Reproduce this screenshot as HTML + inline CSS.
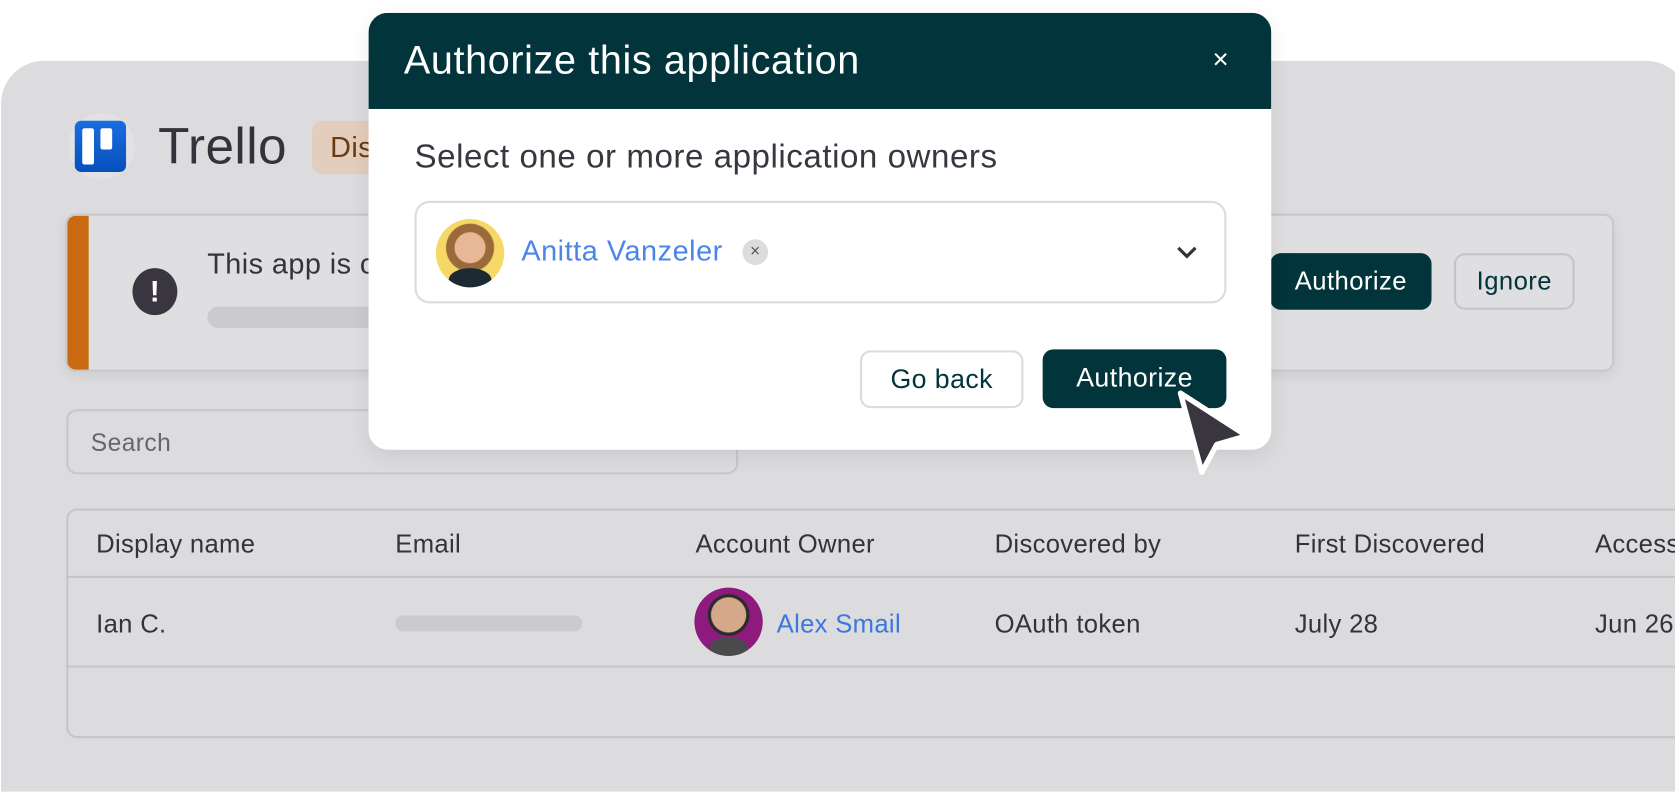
<!DOCTYPE html>
<html><head><meta charset="utf-8"><style>
*{box-sizing:border-box;margin:0;padding:0}
html,body{width:1675px;height:792px;overflow:hidden;background:#fff;font-family:"Liberation Sans",sans-serif;color:#35323b}
#s{position:absolute;left:0;top:0;width:1568px;height:742px;transform:scale(1.0683);transform-origin:0 0;letter-spacing:0.4px}
.a{position:absolute;white-space:nowrap}
.btn{position:absolute;border-radius:10px;display:flex;align-items:center;justify-content:center;font-size:24px}
.dark{background:#02343b;color:#fff}
.th{position:absolute;top:496px;font-size:24px;color:#35323b;letter-spacing:0.3px;white-space:nowrap}
.td{position:absolute;top:571px;font-size:24px;color:#35323b;letter-spacing:0.3px;white-space:nowrap}
</style></head><body><div id="s">
<div class="a" style="left:1px;top:57px;width:1580px;height:684px;background:#dcdcde;border-radius:40px 40px 0 0"></div>
<div class="a" style="left:64px;top:106px;width:62px;height:62px;border-radius:50%;background:#e2e2e4"></div>
<div class="a" style="left:70px;top:113px;width:48px;height:48px;border-radius:6px;background:linear-gradient(#1a6de0,#0650bd)"></div>
<div class="a" style="left:77px;top:120px;width:11px;height:34px;border-radius:2px;background:#fff"></div>
<div class="a" style="left:94px;top:120px;width:11px;height:20px;border-radius:2px;background:#fff"></div>
<div class="a" style="left:148px;top:110px;font-size:48px;color:#35323b">Trello</div>
<div class="a" style="left:292px;top:113px;width:80px;height:50px;border-radius:10px;background:#e3cdbc;color:#6b3a10;font-size:27px;padding:10px 0 0 17px">Dis</div>

<div class="a" style="left:61px;top:200px;width:1450px;height:148px;border-radius:10px;background:#dfdfe1;border:2px solid #c9c9cb;overflow:hidden;box-shadow:0 4px 10px rgba(0,0,0,.06)">
 <div class="a" style="left:0;top:0;width:20px;height:148px;background:#c96a12"></div>
</div>
<div class="a" style="left:124px;top:251px;width:42px;height:44px;border-radius:50%;background:#3a3640;color:#fff;font-weight:bold;font-size:28px;text-align:center;line-height:44px">!</div>
<div class="a" style="left:194px;top:232px;font-size:27px">This app is c</div>
<div class="a" style="left:194px;top:287px;width:200px;height:20px;border-radius:10px;background:#cbcbcd"></div>
<div class="btn dark" style="left:1189px;top:237px;width:151px;height:53px">Authorize</div>
<div class="btn" style="left:1361px;top:237px;width:113px;height:53px;border:2px solid #c5c5c7;color:#02343b">Ignore</div>

<div class="a" style="left:62px;top:383px;width:629px;height:61px;border-radius:10px;border:2px solid #c8c8ca;font-size:23px;color:#68656d;padding:16px 0 0 21px">Search</div>

<div class="a" style="left:62px;top:476px;width:1540px;height:215px;border-radius:10px;border:2px solid #c6c6c8"></div>
<div class="a" style="left:62px;top:539px;width:1520px;height:2px;background:#c6c6c8"></div>
<div class="a" style="left:62px;top:623px;width:1520px;height:2px;background:#c6c6c8"></div>
<div class="th" style="left:90px">Display name</div>
<div class="th" style="left:370px">Email</div>
<div class="th" style="left:651px">Account Owner</div>
<div class="th" style="left:931px">Discovered by</div>
<div class="th" style="left:1212px">First Discovered</div>
<div class="th" style="left:1493px">Access</div>
<div class="td" style="left:90px">Ian C.</div>
<div class="a" style="left:370px;top:576px;width:175px;height:15px;border-radius:8px;background:#cbcbcd"></div>
<div class="a" style="left:650px;top:550px;width:64px;height:64px;border-radius:50%;background:radial-gradient(circle at 50% 40%,#d6a88a 0 16px,#2a2a2a 17px 19px,#8e1a7e 20px);overflow:hidden"><div class="a" style="left:14px;top:46px;width:36px;height:22px;border-radius:50% 50% 0 0;background:#4a4a4a"></div></div>
<div class="td" style="left:727px;color:#3b78de">Alex Smail</div>
<div class="td" style="left:931px">OAuth token</div>
<div class="td" style="left:1212px">July 28</div>
<div class="td" style="left:1493px">Jun 26</div>

<div class="a" style="left:345px;top:12px;width:845px;height:409px;border-radius:18px;background:#fff;overflow:hidden;box-shadow:0 6px 20px rgba(0,0,0,.08)">
 <div class="a" style="left:0;top:0;width:845px;height:90px;background:#02343b"></div>
 <div class="a" style="left:33px;top:24px;font-size:37px;color:#fff;letter-spacing:0.6px">Authorize this application</div>
 <div class="a" style="left:790px;top:28px;font-size:26px;color:#fff">×</div>
 <div class="a" style="left:43px;top:117px;font-size:31px;color:#3a3640;letter-spacing:0.5px">Select one or more application owners</div>
 <div class="a" style="left:43px;top:176px;width:760px;height:96px;border-radius:14px;border:2px solid #dcdcde"></div>
 <div class="a" style="left:63px;top:193px;width:64px;height:64px;border-radius:50%;background:radial-gradient(circle at 50% 42%,#e8b896 0 14px,#9a6a3a 15px 22px,#f6d866 23px);overflow:hidden"><div class="a" style="left:12px;top:46px;width:40px;height:22px;border-radius:50% 50% 0 0;background:#1c2a33"></div></div>
 <div class="a" style="left:143px;top:208px;font-size:27px;color:#4a86e8;letter-spacing:0.5px">Anitta Vanzeler</div>
 <div class="a" style="left:350px;top:212px;width:24px;height:24px;border-radius:50%;background:#dcdcde;color:#555;font-size:16px;text-align:center;line-height:24px">×</div>
 <svg class="a" style="left:755px;top:216px" width="22" height="16" viewBox="0 0 22 16"><path d="M3 4l8 8 8-8" fill="none" stroke="#35323b" stroke-width="3"/></svg>
 <div class="btn" style="left:460px;top:316px;width:153px;height:54px;border:2px solid #dcdcde;color:#02343b;font-size:25px">Go back</div>
 <div class="btn dark" style="left:631px;top:315px;width:172px;height:55px;font-size:25px">Authorize</div>
</div>
<svg class="a" style="left:1095px;top:360px" width="85" height="90" viewBox="0 0 85 90"><path d="M10 8 L72 48 L44 56 L30 82 Z" fill="#3a3640" stroke="#fff" stroke-width="5" stroke-linejoin="round"/></svg>
</div></body></html>
